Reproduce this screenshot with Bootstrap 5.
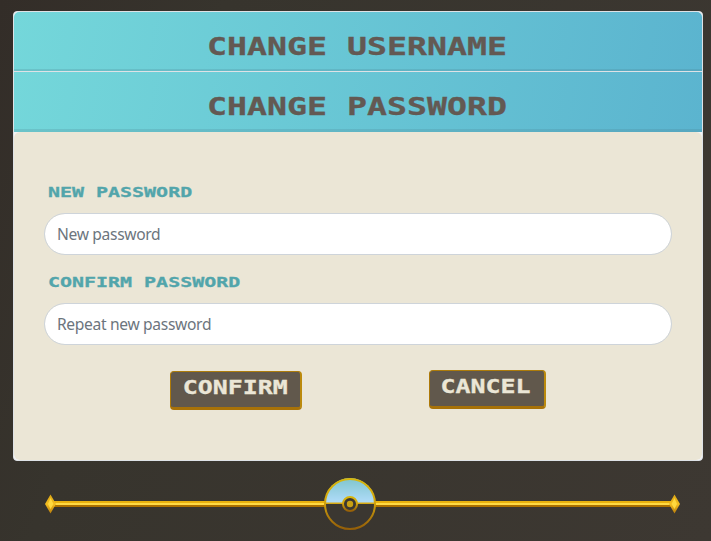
<!DOCTYPE html>
<html lang="en">
<head>
<meta charset="utf-8">
<meta name="viewport" content="width=device-width, initial-scale=1">
<title>Account settings</title>
<link href="https://cdn.jsdelivr.net/npm/bootstrap@5.3.0/dist/css/bootstrap.min.css" rel="stylesheet">
<style>
body{background:linear-gradient(110deg,#332d28 0%,#37342d 25%,#3d3832 100%);height:541px;overflow:hidden;padding:11px 8px 0 13px}
.settings{height:450px;background:#f4f4f6;border:1px solid #dee2e6;border-radius:4px;overflow:hidden}
.pixel{font-family:"DejaVu Sans Mono",monospace;font-weight:700;white-space:pre;text-transform:uppercase}
.pixel span{display:inline-block;transform:scaleX(1.34);-webkit-text-stroke:.3px currentColor}
.head{height:60px;padding:10px 2px 0 0;border:0;border-bottom:1px solid #dee2e6;border-radius:0;background:linear-gradient(100deg,#74d7da,#5bb4cf);box-shadow:inset 0 -2px 0 rgba(70,120,135,.2);color:#635953;font-size:24.8px;line-height:50px}
.head.opened{border-bottom:0;box-shadow:inset 0 -3px 0 rgba(70,120,135,.2)}
.panel{height:328px;background:#ebe6d6;border-radius:6px;padding:48px 30px 0}
.caption{height:33px;line-height:24px;font-size:14.9px;color:#52a5ab;padding-left:4px;margin:0}
.caption span{transform-origin:left}
.caption-low{height:32px;line-height:23px}
.entry{height:42px;border:1px solid #ced4da;border-radius:21px;padding:0 12px;font:15.6px "Noto Sans",sans-serif;letter-spacing:-.33px;color:#212529}
.entry::placeholder{color:#6c757d;opacity:1}
.actions{margin-top:26px}
.key{height:39px;padding:0 2px 3px 0;color:#ebe6d6;background:#61584c;border:solid;border-width:1px 2px 3px 1px;border-color:#ad7c0b #bb8a0d #a87208 #ad7908;border-radius:4px;font-size:18.6px;line-height:30px}
.key:hover{color:#fff;background:#6d6355}
.key span{vertical-align:top}
.key-ok{width:132px}.key-no{width:117px;margin-top:-1px}
.ornament{display:block;margin:16px 0 0 31px}
</style>
</head>
<body>
<main>
<section class="card settings">
<h2 class="card-header head pixel text-center m-0"><span>Change Username</span></h2>
<h2 class="card-header head opened pixel text-center m-0"><span>Change Password</span></h2>
<form class="panel">
<label class="caption pixel d-block" for="new"><span>New Password</span></label>
<input class="form-control entry" id="new" type="password" placeholder="New password">
<div class="pt-3"><label class="caption caption-low pixel d-block" for="again"><span>Confirm Password</span></label></div>
<input class="form-control entry" id="again" type="password" placeholder="Repeat new password">
<div class="actions d-flex justify-content-evenly align-items-start">
<button type="button" class="btn key key-ok pixel"><span>Confirm</span></button>
<button type="button" class="btn key key-no pixel"><span>Cancel</span></button>
</div>
</form>
</section>
<svg class="ornament" width="637" height="54" viewBox="44 477 637 54" aria-hidden="true">
<defs>
<linearGradient id="gold" x1="0" y1="0" x2="0" y2="1"><stop offset="0" stop-color="#d7b60b"/><stop offset=".45" stop-color="#d3a50d"/><stop offset="1" stop-color="#945e08"/></linearGradient>
<linearGradient id="sky" x1="0" y1="0" x2="0" y2="1"><stop offset="0" stop-color="#7fc5cd"/><stop offset="1" stop-color="#b1dcfa"/></linearGradient>
<linearGradient id="gem" x1="0" y1="0" x2="0" y2="1"><stop offset="0" stop-color="#d9a514"/><stop offset=".5" stop-color="#f3bd20"/><stop offset="1" stop-color="#b87c0b"/></linearGradient>
</defs>
<path fill="#e9b10e" d="M50 501h625v2H50z"/><path fill="#ffda44" d="M50 503h625v2H50z"/><path fill="#ab7000" d="M50 505h625v2H50z"/>
<path fill="url(#gem)" d="M50.500 494.500L56 504L50.500 513.500L45 504zM674.500 494.500L680 504L674.500 513.500L669 504z"/>
<path fill="#ffd83e" d="M50.500 498L53.500 504L50.500 509L48 504zM674.500 498L677 504L674.500 509L671.500 504z"/>
<circle cx="350" cy="504" r="25" fill="#3b3731"/>
<path fill="url(#sky)" d="M325 503a25 25 0 0 1 50 0z"/>
<path fill="#d7a914" d="M325 502.500h50v1.500h-50z"/>
<circle cx="350" cy="504" r="25" fill="none" stroke="url(#gold)" stroke-width="2"/>
<circle cx="350" cy="504" r="7" fill="#3b3731" stroke="url(#gold)" stroke-width="2"/>
<circle cx="350" cy="504" r="3.200" fill="#c9a013"/>
</svg>
</main>
<script src="https://cdn.jsdelivr.net/npm/bootstrap@5.3.0/dist/js/bootstrap.bundle.min.js"></script>
</body>
</html>
